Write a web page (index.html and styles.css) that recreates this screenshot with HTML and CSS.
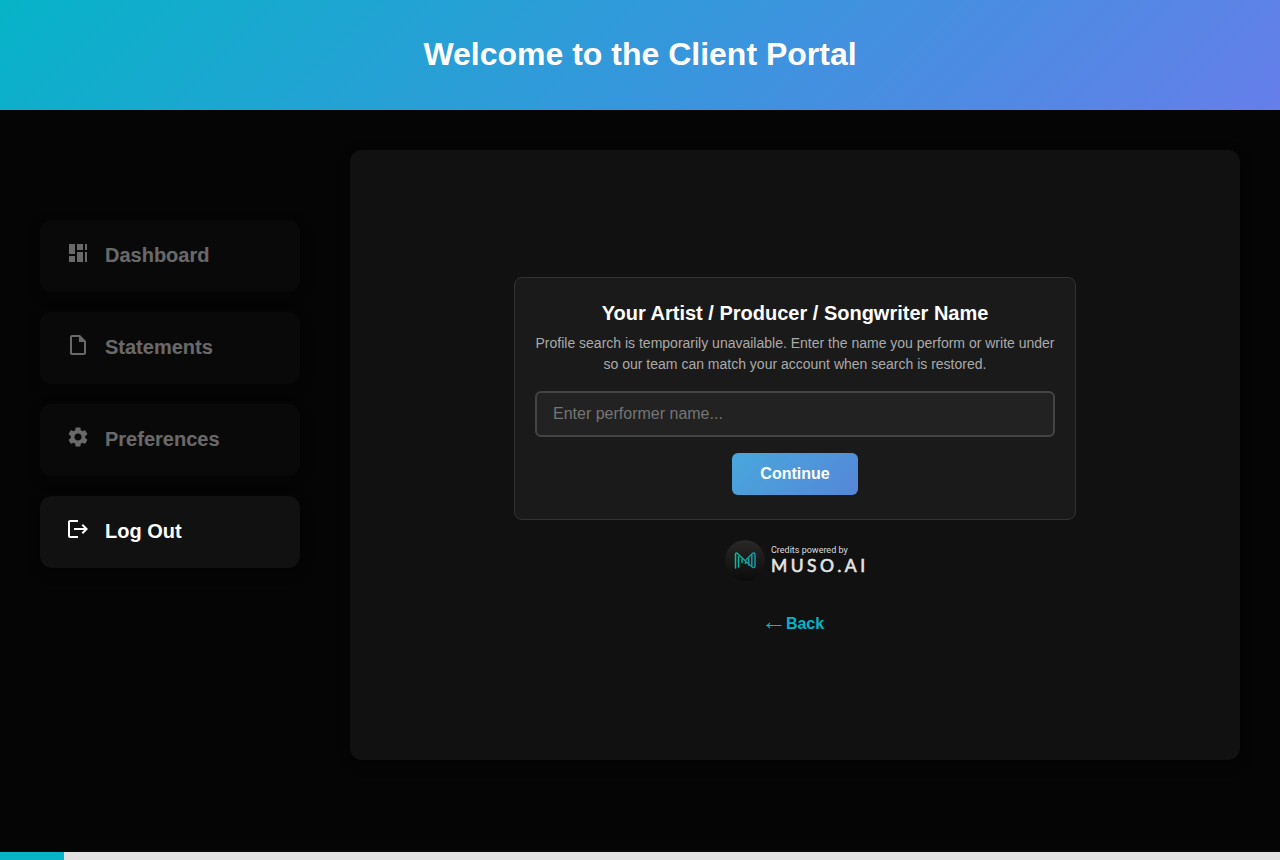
FILE: index.html
```html
<!DOCTYPE html>
<html lang="en">
<head>
<meta charset="utf-8">
<title>Client Portal</title>
<link rel="stylesheet" href="styles.css">
</head>
<body>
<header class="header"><h1 class="header-title">Welcome to the Client Portal</h1></header>
<div class="layout">
  <nav class="sidebar">
    <a class="nav-item disabled"><svg class="nav-icon" viewBox="0 0 24 24"><path d="M3 3h6v10H3zM11 3h6v6h-6zM19 3h2v6h-2zM3 15h6v6H3zM11 11h6v10h-6zM19 11h2v10h-2z"/></svg><span>Dashboard</span></a>
    <a class="nav-item disabled"><svg class="nav-icon" viewBox="0 0 24 24"><path d="M14 2H6c-1.1 0-1.99.9-1.99 2L4 20c0 1.1.89 2 1.99 2H18c1.1 0 2-.9 2-2V8l-6-6zM6 20V4h7v5h5v11H6z"/></svg><span>Statements</span></a>
    <a class="nav-item disabled"><svg class="nav-icon" viewBox="0 0 24 24"><path d="M19.14 12.94c.04-.3.06-.61.06-.94 0-.32-.02-.64-.07-.94l2.03-1.58c.18-.14.23-.41.12-.61l-1.92-3.32c-.12-.22-.37-.29-.59-.22l-2.39.96c-.5-.38-1.03-.7-1.62-.94l-.36-2.54c-.04-.24-.24-.41-.48-.41h-3.84c-.24 0-.43.17-.47.41l-.36 2.54c-.59.24-1.13.57-1.62.94l-2.39-.96c-.22-.08-.47 0-.59.22L2.74 8.87c-.12.21-.08.47.12.61l2.03 1.58c-.05.3-.09.63-.09.94s.02.64.07.94l-2.03 1.58c-.18.14-.23.41-.12.61l1.92 3.32c.12.22.37.29.59.22l2.39-.96c.5.38 1.03.7 1.62.94l.36 2.54c.05.24.24.41.48.41h3.84c.24 0 .44-.17.47-.41l.36-2.54c.59-.24 1.13-.56 1.62-.94l2.39.96c.22.08.47 0 .59-.22l1.92-3.32c.12-.22.07-.47-.12-.61l-2.01-1.58zM12 15.6c-1.98 0-3.6-1.62-3.6-3.6s1.62-3.6 3.6-3.6 3.6 1.62 3.6 3.6-1.62 3.6-3.6 3.6z"/></svg><span>Preferences</span></a>
    <a class="nav-item"><svg class="nav-icon" viewBox="0 0 24 24"><path d="M17 7l-1.41 1.41L18.17 11H8v2h10.17l-2.58 2.58L17 17l5-5zM4 5h8V3H4c-1.1 0-2 .9-2 2v14c0 1.1.9 2 2 2h8v-2H4V5z"/></svg><span>Log Out</span></a>
  </nav>
  <main class="panel">
    <section class="card">
      <h2 class="card-title">Your Artist / Producer / Songwriter Name</h2>
      <p class="card-hint">Profile search is temporarily unavailable. Enter the name you perform or write under so our team can match your account when search is restored.</p>
      <input class="name-input" type="text" placeholder="Enter performer name...">
      <button class="continue" type="button">Continue</button>
    </section>
    <div class="credits">
      <svg class="credits-logo" viewBox="0 0 40 41">
        <defs>
          <linearGradient id="disc" x1="0" y1="0" x2="0" y2="1"><stop offset="0" stop-color="#292827"/><stop offset="1" stop-color="#0b0b0b"/></linearGradient>
          <linearGradient id="mark" x1="0" y1="0" x2="1" y2="0"><stop offset="0" stop-color="#0bb798"/><stop offset="1" stop-color="#0e96a7"/></linearGradient>
        </defs>
        <ellipse cx="20" cy="20.5" rx="20" ry="20.5" fill="url(#disc)"/>
        <path d="M10.5 28V14.5q0-2.2 2-1L26.5 26.5q3.5 2.5 3.5-1V15q0-3.2-2.700-1.500L21.500 19.500M13.500 27V16.500M17 22.500v-3M20.500 23.500v-3M23.800 25v-6M26.800 26V15" fill="none" stroke="url(#mark)" stroke-width="1.5" stroke-linecap="round"/>
      </svg>
      <div class="credits-text"><span class="credits-label">Credits powered by</span><span class="credits-name">MUSO.AI</span></div>
    </div>
    <a class="back"><svg class="back-arrow" viewBox="0 0 16 10"><path d="M15.500 5.500H1M3.800 2.800Q3 4.800 .8 5.500Q3 6.200 3.800 8.200"/></svg><span>Back</span></a>
  </main>
</div>
<div class="progress"><div class="progress-fill"></div></div>
</body>
</html>
```
FILE: styles.css
```css
* { box-sizing: border-box; }
body {
  margin: 0;
  height: 860px;
  overflow: hidden;
  display: flex;
  flex-direction: column;
  background: #050505;
  color: #fff;
  font-family: "Liberation Sans", Arial, sans-serif;
}
.header {
  height: 110px;
  padding-bottom: 1px;
  display: flex;
  align-items: center;
  justify-content: center;
  background: linear-gradient(135deg, #06b3c7 0%, #3498db 50%, #667eea 100%);
}
.header-title { margin: 0; font-size: 32px; line-height: 37px; }
.layout { flex: 1; display: flex; gap: 50px; padding: 40px; }
.sidebar { width: 260px; padding-top: 70px; display: flex; flex-direction: column; gap: 20px; }
.nav-item {
  height: 72px;
  padding: 0 26px 2px;
  display: flex;
  align-items: center;
  gap: 15px;
  border-radius: 12px;
  background: #111;
  box-shadow: 0 4px 12px rgba(0, 0, 0, .5);
  font-size: 20px;
  font-weight: bold;
}
.nav-item.disabled { opacity: .4; }
.nav-icon { width: 24px; height: 24px; margin-bottom: 4px; fill: currentColor; }
.panel {
  flex: 1;
  height: 610px;
  padding-top: 127px;
  display: flex;
  flex-direction: column;
  align-items: center;
  border-radius: 12px;
  background: #111;
  box-shadow: 0 4px 12px rgba(0, 0, 0, .5);
}
.card {
  width: 562px;
  height: 243px;
  padding: 24px 20px;
  display: flex;
  flex-direction: column;
  align-items: center;
  border: 1px solid #333;
  border-radius: 8px;
  background: #1a1a1a;
  text-align: center;
}
.card-title { margin: 0 0 8px; font-size: 20px; line-height: 23px; }
.card-hint { margin: 0 -5px 16px; font-size: 14px; line-height: 21px; color: #aaa; }
.name-input {
  width: 100%;
  height: 46px;
  flex-shrink: 0;
  padding: 0 16px;
  border: 2px solid #444;
  border-radius: 6px;
  background: #222;
  color: #fff;
  font: 16px "Liberation Sans", Arial, sans-serif;
}
.name-input::placeholder { color: #757575; }
.continue {
  width: 126px;
  height: 42px;
  flex-shrink: 0;
  margin-top: 16px;
  border: 0;
  border-radius: 6px;
  background: linear-gradient(135deg, #48a8dc, #5586d8);
  color: #fff;
  font: bold 16px "Liberation Sans", Arial, sans-serif;
}
.credits { display: flex; align-items: flex-start; gap: 6px; width: 140px; height: 41px; margin-top: 20px; }
.credits-logo { width: 40px; height: 41px; flex: none; }
.credits-text { display: flex; flex-direction: column; padding-top: 5px; white-space: nowrap; }
.credits-label { font: 9px/11px Roboto, sans-serif; color: #ddd; }
.credits-name {
  font: 17.5px/19px Lato, sans-serif;
  letter-spacing: 3.5px;
  color: #e4e4e4;
  -webkit-text-stroke: .6px #e4e4e4;
}
.back {
  display: flex;
  align-items: center;
  gap: 4px;
  margin-top: 34px;
  font-size: 16px;
  line-height: 18px;
  font-weight: bold;
  color: #06b3c7;
}
.back-arrow { width: 16px; height: 10px; margin-top: 1px; fill: none; stroke: currentColor; stroke-width: 1.1; }
.progress { height: 8px; background: #e0e0e0; }
.progress-fill { width: 5%; height: 100%; background: #06b3c7; }
```
